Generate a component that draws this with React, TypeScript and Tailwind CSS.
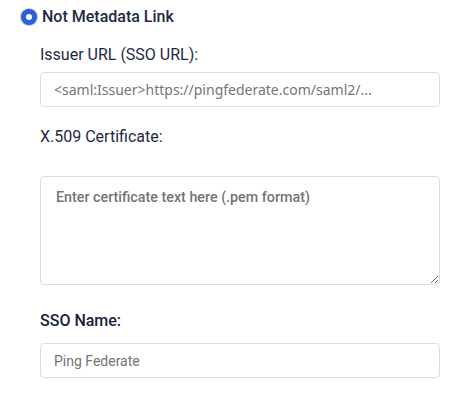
import React from 'react';

const font = { fontFamily: 'Roboto, "Noto Sans", sans-serif' };

export default function App() {
  return (
    <div className="w-[468px] h-[409px] bg-white" style={font}>
      <label className="flex items-center pl-[21px] pt-[8px] h-[26px] gap-[5px] cursor-pointer">
        <span className="w-4 h-4 rounded-full bg-[#2f5fd6] flex items-center justify-center shadow-[0_0_0_1px_rgba(47,95,214,0.35)]">
          <span className="w-[6px] h-[6px] rounded-full bg-white" />
        </span>
        <span className="text-[16px] font-medium text-[#1e2a44] leading-[18px]">Not Metadata Link</span>
      </label>

      <div className="pl-[40px] pr-[28px]">
        <div className="mt-[19px] text-[16px] leading-[20px] text-[#1e2a44]">Issuer URL (SSO URL):</div>
        <input
          className="mt-[7px] w-[400px] h-[35px] rounded-[4px] border border-[#dcdcdc] px-[13px] text-[14px] font-['Noto_Sans',sans-serif] text-[#555] placeholder:text-[#757575] outline-none"
          placeholder="<saml:Issuer>https://pingfederate.com/saml2/..."
        />

        <div className="mt-[20px] text-[16px] leading-[20px] text-[#1e2a44]">X.509 Certificate:</div>
        <textarea
          className="block mt-[29px] w-[400px] h-[109px] rounded-[4px] border border-[#dcdcdc] px-[15px] py-[10px] text-[14.3px] font-medium placeholder:text-[#757575] outline-none resize"
          placeholder="Enter certificate text here (.pem format)"
        />

        <div className="mt-[26px] text-[16px] leading-[20px] font-medium text-[#16213d]">SSO Name:</div>
        <input
          className="mt-[12px] w-[400px] h-[35px] rounded-[4px] border border-[#dcdcdc] px-[13px] text-[14px] placeholder:text-[#757575] outline-none"
          placeholder="Ping Federate"
        />
      </div>
    </div>
  );
}
